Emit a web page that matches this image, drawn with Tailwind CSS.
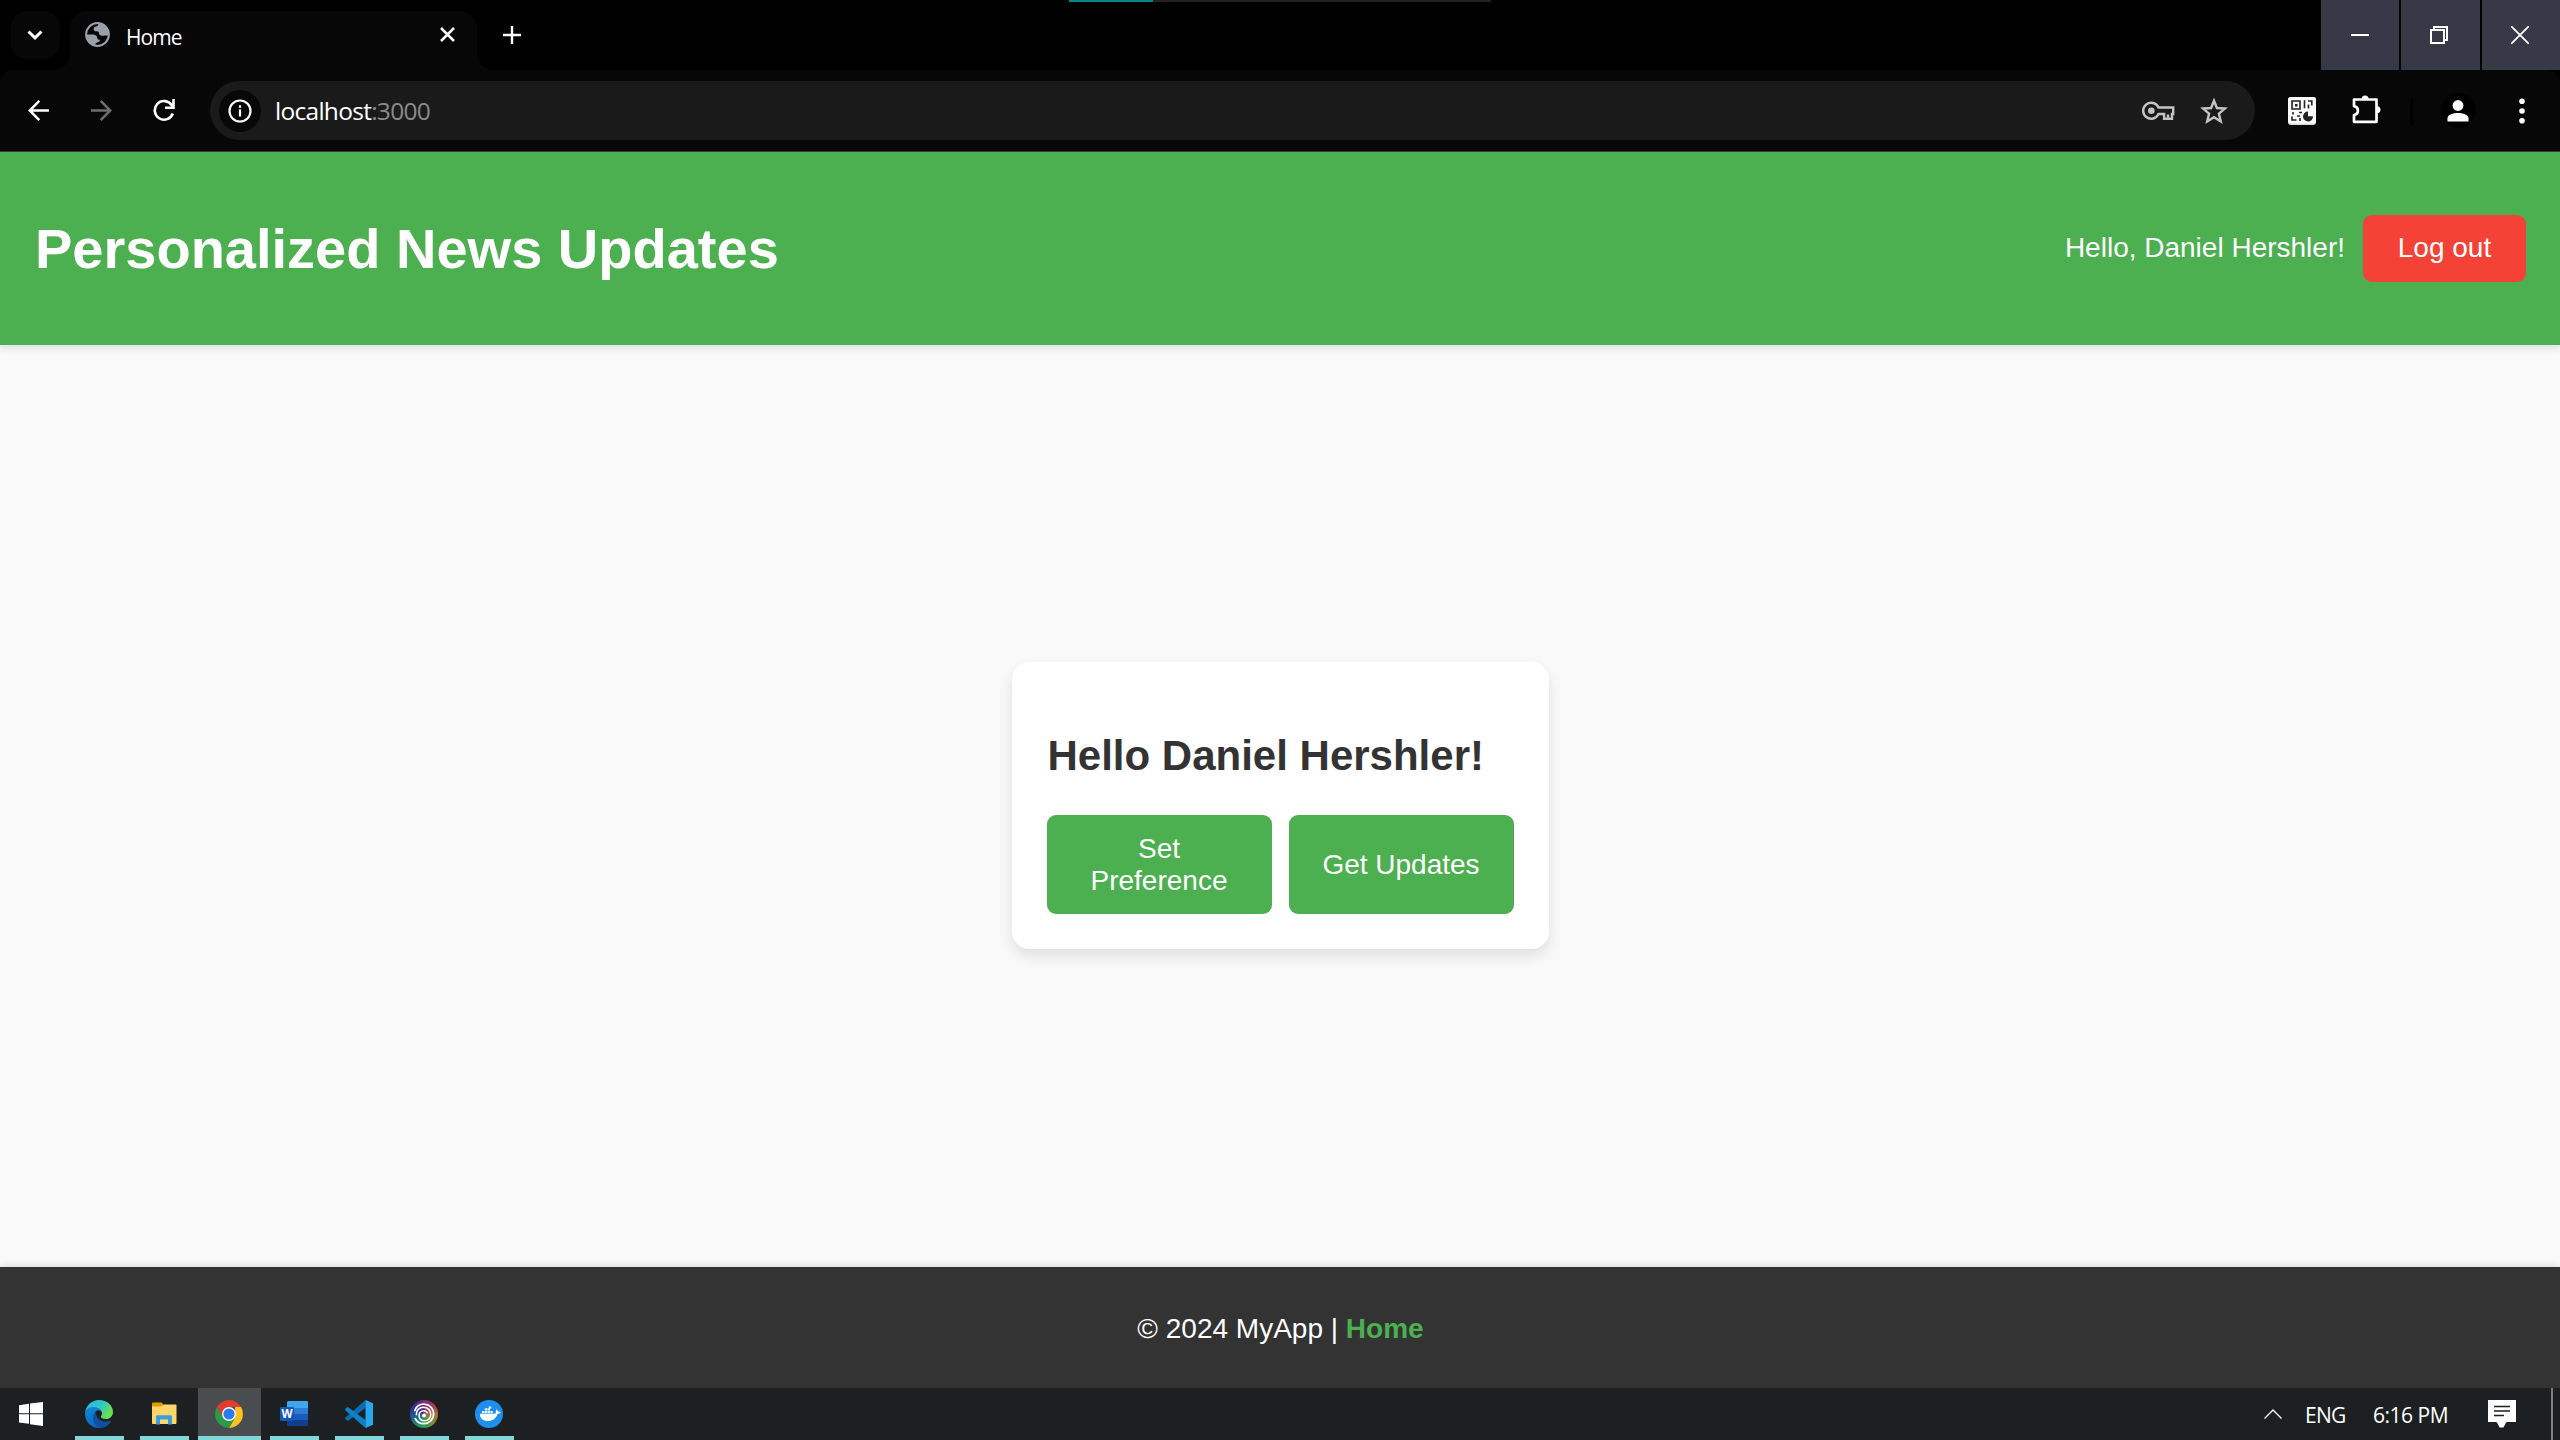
<!DOCTYPE html>
<html lang="en">
<head>
<meta charset="utf-8">
<title>Home</title>
<script src="https://cdn.jsdelivr.net/npm/@tailwindcss/browser@4"></script>
</head>
<body class="flex h-[1440px] w-[2560px] flex-col overflow-hidden bg-black font-['Liberation_Sans',Arial,sans-serif]">

<!-- Tab strip -->
<div class="relative flex h-[70px] shrink-0 bg-black">
  <div class="ml-[11px] mt-[11px] flex h-12 w-[49px] items-center justify-center rounded-[16px] bg-[#070707] pr-px">
    <svg width="16" height="10" viewBox="0 0 16 10" fill="none" stroke="#fff" stroke-width="3"><path d="M1.500 1.500 8 7.800l6.500-6.300"/></svg>
  </div>
  <div class="relative ml-[10px] mt-[11px] flex h-[59px] w-[407px] items-center rounded-t-[17px] bg-[#070707] pl-[15px] pr-[22px]">
    <svg class="absolute bottom-0 -left-[17px]" width="17" height="17"><path d="M17 0v17H0A17 17 0 0 0 17 0" fill="#070707"/></svg>
    <svg class="absolute bottom-0 -right-[17px]" width="17" height="17"><path d="M0 0v17h17A17 17 0 0 1 0 0" fill="#070707"/></svg>
    <svg class="-mt-[12px]" width="25" height="25" viewBox="0 0 25 25"><circle cx="12.500" cy="12.500" r="11.400" fill="#070707" stroke="#9aa0a9" stroke-width="2"/><path fill="#9aa0a9" d="M14 1c-1 2-1 3-3 3.500-2 .3-2.500 1.200-2.300 3 .2 1.500 1.500 1.800 3 1.800 2 0 2.300.7 2.300 2 .2 1.700 1.200 2.400 3 2.400 1.600 0 2.600-.4 3.600-.2 1.300.2 2 .1 3.400-.5C24 6.500 19 1 14 1zM1 12.500h6.500c3 0 4.800 1.200 4.800 3.800 0 1 .7 1.200 1.700 1.300 1.200.2 1 1.400.2 2-1.200 1-3.200.7-3.900 2.400-.2.700-.2 1.200-.2 2C4.500 23.300 1 18.500 1 12.500z"/></svg>
    <span class="-mt-[8px] ml-[16px] font-['Open_Sans'] text-[21px] leading-7 tracking-[-0.9px] text-white">Home</span>
    <svg class="-mt-[12px] ml-auto" width="15" height="15" viewBox="0 0 15 15" stroke="#fff" stroke-width="2.500"><path d="m1 1 13 13M14 1 1 14"/></svg>
  </div>
  <svg class="ml-[26px] mt-[26px]" width="18" height="18" viewBox="0 0 18 18" stroke="#fff" stroke-width="2.400"><path d="M9 0v18M0 9h18"/></svg>
  <div class="absolute left-[1069px] top-0 flex h-[2px] w-[422px] bg-[#222]"><div class="w-[84px] bg-[#078488]"></div></div>
  <div class="ml-auto flex gap-[2px]">
    <div class="flex w-[78px] items-center justify-center bg-[#373946]"><div class="h-[2px] w-[18px] bg-white"></div></div>
    <div class="flex w-[79px] items-center justify-center bg-[#373946] pr-[3px]"><svg width="18" height="18" viewBox="0 0 18 18" fill="none" stroke="#fff" stroke-width="2" shape-rendering="crispEdges"><path d="M1 4h13v13H1zM4 4V1h13v13h-3"/></svg></div>
    <div class="flex w-[78px] items-center justify-center bg-[#373946] pr-[3px]"><svg width="18" height="18" viewBox="0 0 18 18" stroke="#fff" stroke-width="1.800"><path d="m0 0 18 18M18 0 0 18"/></svg></div>
  </div>
</div>

<!-- Toolbar -->
<div class="flex h-[82px] shrink-0 items-center rounded-t-[14px] border-b border-[#3b3b3b] bg-[#070707] pl-[7px]">
  <div class="flex w-[63px] justify-center"><svg width="21" height="21" viewBox="0 0 21 21" fill="none" stroke="#fff" stroke-width="2.500"><path d="M21 10.500H2M11.300.9l-9.600 9.600 9.600 9.600"/></svg></div>
  <div class="flex w-[63px] justify-center"><svg width="21" height="21" viewBox="0 0 21 21" fill="none" stroke="#6e6e6e" stroke-width="2.500"><path d="M0 10.500h19M9.700.9l9.600 9.600-9.600 9.600"/></svg></div>
  <div class="flex w-[63px] justify-center pr-px"><svg width="22" height="23" viewBox="0 0 22 23" fill="none" stroke="#fff" stroke-width="2.600"><path d="M19.800 14.500A9.300 9.300 0 1 1 18.800 6.200L21 8.500M20.500 0v8.700h-8.500"/></svg></div>
  <div class="ml-[14px] flex h-[59px] w-[2045px] items-center rounded-full bg-[#1a1a1a] pl-[9px]">
    <div class="flex size-[42px] items-center justify-center rounded-full bg-[#070707]">
      <svg width="24" height="24" viewBox="0 0 24 24" fill="none" stroke="#fff" stroke-width="2.200"><circle cx="12" cy="12" r="10.500"/><path d="M12 10.500v7M12 6.200v2.500"/></svg>
    </div>
    <span class="ml-[14px] font-['Open_Sans'] text-[24.500px] leading-8 tracking-[-0.72px] text-white">localhost<span class="text-[#8a8a8a]">:3000</span></span>
    <svg class="ml-auto" width="33" height="20" viewBox="0 0 33 20" fill="none" stroke="#c4c4c4" stroke-width="2.400"><path d="M16.500 6.500A8 8 0 1 0 16.500 13h5.600v4.800H30V13h1.200V6.500z"/><path d="M26 18v-4.500"/><circle cx="9.300" cy="9.800" r="3.300" fill="#c4c4c4" stroke="none"/></svg>
    <svg class="ml-[25px] mr-[27px]" width="28" height="28" viewBox="0 0 28 28" fill="none" stroke="#c4c4c4" stroke-width="2.400"><path d="m14 3.800 2.900 7.200 8 .6-6 5 1.900 7.900-6.800-4.300-6.800 4.300 1.900-7.900-6-5 8-.6z"/></svg>
  </div>
  <svg class="ml-[33px]" width="28" height="28" viewBox="0 0 28 28"><rect width="28" height="28" rx="3" fill="#d9d9d9"/><rect width="28" height="26.500" rx="3" fill="#fafafa"/><g fill="none" stroke="#222" stroke-width="1.600"><path d="M4 4h8v8H4zM16.500 3.200v8M20 4h3.800v4.500M20.500 7.500v4M5 15v2.500M9 19h3M11 15.500h3M4 19.500V23h4.500M12 21v3"/></g><path fill="#222" d="M7 7h2.500v2.500H7zM20 14.500v4.800h5a5 5 0 1 1-5-4.800z"/></svg>
  <svg class="-mt-[3px] ml-[36px]" width="30" height="30" viewBox="0 0 30 30" fill="none" stroke="#fff" stroke-width="2.700" stroke-linejoin="round"><path d="M2 5.500h22.500v22.300H2v-6.700c5.200-1 5.200-8 0-9z"/><path fill="#fff" stroke="none" d="M9.600 5a3.500 3.500 0 0 1 7 0zM25 12.200a3.500 3.500 0 0 1 0 7z"/></svg>
  <div class="ml-[28px] h-7 w-[3px] rounded bg-black"></div>
  <div class="ml-[28px] flex size-[35px] items-center justify-center rounded-full bg-black pr-px"><svg width="22" height="22" viewBox="0 0 22 22" fill="#fff"><circle cx="11" cy="5.500" r="5.400"/><path d="M.5 21.500v-3.300c0-3.600 6-5.200 10.500-5.200s10.500 1.600 10.500 5.200v3.300z"/></svg></div>
  <svg class="ml-[43px]" width="6" height="26" viewBox="0 0 6 26" fill="#fff"><circle cx="3" cy="3.200" r="2.800"/><circle cx="3" cy="13" r="2.800"/><circle cx="3" cy="22.700" r="2.800"/></svg>
</div>

<!-- Page -->
<header class="relative flex h-[193px] shrink-0 items-center justify-between bg-[#4caf50] pl-[35px] pr-[34px] text-white shadow-[0_3.500px_7px_rgba(0,0,0,0.1)]">
  <h1 class="text-[56px] font-bold leading-[64px]">Personalized News Updates</h1>
  <div class="flex items-center text-[28px] leading-8">
    <span class="pb-[2px]">Hello, Daniel Hershler!</span>
    <button class="ml-[18px] h-[67px] w-[163px] rounded-[9px] bg-[#f44336] pb-[2px]">Log out</button>
  </div>
</header>
<main class="flex h-[922px] shrink-0 items-center justify-center bg-[#f9f9f9] pb-[2px]">
  <section class="h-[287px] w-[537px] rounded-[17.500px] bg-white px-[35px] pt-[70px] shadow-[0_7px_14px_rgba(0,0,0,0.1)]">
    <h2 class="whitespace-nowrap pl-px text-[42px] font-bold leading-[48px] text-[#333]">Hello Daniel Hershler!</h2>
    <div class="mt-[35px] flex gap-[17px] text-[28px] leading-8 text-white">
      <button class="h-[99px] w-[225px] rounded-[9px] bg-[#4caf50] px-[35px] pt-px">Set Preference</button>
      <button class="h-[99px] w-[225px] whitespace-nowrap rounded-[9px] bg-[#4caf50] pt-px">Get Updates</button>
    </div>
  </section>
</main>
<footer class="relative flex h-[121px] shrink-0 items-center justify-center bg-[#333] text-[28px] leading-8 text-white shadow-[0_-3.500px_7px_rgba(0,0,0,0.1)]">
  <p class="pl-px pt-[2px]">© 2024 MyApp | <a class="font-bold text-[#4caf50]">Home</a></p>
</footer>

<!-- Taskbar -->
<div class="relative flex h-[52px] shrink-0 gap-[2px] bg-[#1c2022]">
  <div class="mr-1 flex w-[62px] items-center justify-center"><svg width="24" height="24" viewBox="0 0 24 24" fill="#fff"><path d="M0 3.200 10 1.800v9.400H0zM11 1.600 24 0v11.200H11zM0 12.300h10v9.500L0 20.500zM11 12.300h13V24l-13-1.700z"/></svg></div>

  <div class="flex w-[63px] flex-col items-center justify-between pt-3">
    <svg class="mr-px" width="28" height="28" viewBox="0 0 28 28"><defs><linearGradient id="eg" x1="0" y1="0" x2="1" y2=".5"><stop offset="0" stop-color="#2ab4f0"/><stop offset=".55" stop-color="#2fc6c8"/><stop offset="1" stop-color="#6be14c"/></linearGradient><linearGradient id="eb" x1="0" y1="0" x2=".5" y2="1"><stop offset="0" stop-color="#1489d4"/><stop offset="1" stop-color="#0a63c4"/></linearGradient></defs>
      <path fill="url(#eg)" d="M.3 11.500C1.500 5 7 0 14 0c8 0 14 5.500 14 12 0 4.300-3.200 7-7 7-3.500 0-5.200-1.200-5.200-2.200 0-.8 1.200-1.300 1.200-3.500 0-2.800-2.800-4.300-5.500-4.300z"/>
      <path fill="url(#eb)" d="M0 14C0 9.500 4 7 8.500 7c4.800 0 8.500 3 8.500 6.300 0-1.800-1.500-3-3.300-3-2.700 0-4.200 2.300-4.200 5.200 0 5.500 4.500 9.500 10 9.500 1.500 0 3-.4 4-.8C21 26.800 17.500 28 14 28 6 28 0 21.700 0 14z"/>
      <path fill="#114f9e" d="M11 12.200c-2 1.500-3 3.300-3 5.800 0 5 3.500 9.200 7.500 9.900 4.500-.2 8.500-3 10.500-6.700.3-.7-.3-.9-.8-.6-5.700 2.600-14.200.2-14.200-8.400z"/></svg>
    <div class="h-1 w-[49px] bg-[#83d6d8]"></div>
  </div>

  <div class="flex w-[63px] flex-col items-center justify-between pt-[14px]">
    <svg class="mr-px" width="26" height="24" viewBox="0 0 26 24"><path fill="#e39c04" d="M1 1.500C1 .7 1.500.5 2 .5h8.500L13 3v6H1z"/><path fill="#ffd769" d="M1 4.500h9.500L13 2.500h11.500c.7 0 1 .4 1 1V21c0 .6-.4 1-1 1H2c-.6 0-1-.4-1-1z"/><path fill="#3d9be4" d="M5 14.500c0-.8.600-1.300 1.300-1.300h13.400c.8 0 1.300.5 1.300 1.300V22.500h-4v-5H9v5H5z"/></svg>
    <div class="h-1 w-[49px] bg-[#83d6d8]"></div>
  </div>

  <div class="flex w-[63px] flex-col items-center justify-between bg-[#4a4d4f] pt-3">
    <svg class="mr-px" width="28" height="28" viewBox="0 0 28 28"><path fill="#e33b2e" d="M1.900 7A14 14 0 0 1 26.100 7H14L8 17.500z"/><path fill="#fcc31e" d="M26.100 7A14 14 0 0 1 14 28l6.100-10.500L20.100 7z"/><path fill="#2b9b48" d="M1.900 7A14 14 0 0 0 14 28l6-10.500H8z"/><circle cx="14" cy="14" r="7" fill="#fff"/><circle cx="14" cy="14" r="5.600" fill="#2b7af0"/></svg>
    <div class="h-1 w-full bg-[#83d6d8]"></div>
  </div>

  <div class="flex w-[63px] flex-col items-center justify-between pt-3">
    <svg class="mr-px" width="28" height="28" viewBox="0 0 28 28"><path fill="#41a5ee" d="M8 1h19a1 1 0 0 1 1 1v6H7V2z"/><path fill="#2b7cd3" d="M7 8h21v6H7z"/><path fill="#185abd" d="M7 14h21v6H7z"/><path fill="#103f91" d="M7 20h21v5a1 1 0 0 1-1 1H8a1 1 0 0 1-1-1z"/><rect y="7" width="14" height="14" rx="1.200" fill="#1756b8"/><text x="7" y="18.200" text-anchor="middle" font-family="Open Sans" font-weight="700" font-size="11.500" fill="#fff">W</text></svg>
    <div class="h-1 w-[49px] bg-[#83d6d8]"></div>
  </div>

  <div class="flex w-[63px] flex-col items-center justify-between pt-3">
    <svg class="mr-px" width="28" height="28" viewBox="0 0 28 28"><path fill="#0b6cb0" d="M.5 17.500 20.500 0v8L3.500 20.600c-.6.400-1.100.3-1.600-.1L.4 19.100c-.5-.4-.5-1.100.1-1.600z"/><path fill="#1181c6" d="M.5 10.500 20.500 28v-8L3.500 7.400c-.6-.4-1.100-.3-1.600.1L.4 8.900c-.5.400-.5 1.100.1 1.600z"/><path fill="#27a7ee" d="M20.500 0 28 3.200v21.600L20.500 28z"/></svg>
    <div class="h-1 w-[49px] bg-[#83d6d8]"></div>
  </div>

  <div class="flex w-[63px] flex-col items-center justify-between pt-3">
    <div class="mr-px flex size-7 items-center justify-center rounded-full bg-[conic-gradient(from_0deg,#7a2a78,#a83a50,#a87038,#7a8a38,#2f9a50,#22807a,#224c98,#3a2890,#7a2a78)]"><svg width="28" height="28" viewBox="0 0 28 28" fill="none" stroke="#fff" stroke-linecap="round"><path stroke-width="1.800" d="M4.800 10.500C6.200 6.300 10 4 14.200 4.100c5.400.2 9.400 4.500 9.400 9.900 0 5.400-4.400 9.600-9.800 9.600-3.800 0-7-2-8.500-5"/><path stroke-width="1.600" d="M6.300 14.800c-.3-4.200 3-7.600 7.200-7.600 4.300 0 7.300 3.300 7.300 7.300 0 3.600-2.700 6.300-6.200 6.300-3.200 0-5.600-2.200-5.600-5.200 0-2.800 2-4.900 4.700-4.900 1.600 0 2.900.8 3.500 2"/><circle cx="14" cy="15.600" r="2" fill="#fff" stroke="none"/></svg></div>
    <div class="h-1 w-[49px] bg-[#83d6d8]"></div>
  </div>

  <div class="flex w-[63px] flex-col items-center justify-between pt-3">
    <svg class="mr-px" width="28" height="28" viewBox="0 0 28 28"><circle cx="14" cy="14" r="14" fill="#1d8fee"/><g fill="#fff"><path d="M5 13.700h14.500c1 0 1.500-.4 1.300-1.600-.1-1 .2-2 .9-2.800.9.700 1.400 1.500 1.400 2.400.9-.2 1.900 0 2.700.5-.6 1.200-1.700 1.700-3.200 1.700-1.700 4.800-5 7-9.800 7-5 0-8-2.500-7.800-7.200z"/><path d="M7 10.900h2.400v2.300H7zM9.800 10.900h2.400v2.300H9.800zM12.600 10.900H15v2.300h-2.400zM15.400 10.900h2.400v2.300h-2.400zM9.800 8.200h2.400v2.300H9.800zM12.600 8.200H15v2.300h-2.400zM13.800 6.500h2.400v2h-2.400z" opacity=".9"/></g></svg>
    <div class="h-1 w-[49px] bg-[#83d6d8]"></div>
  </div>

  <div class="ml-auto flex items-center font-['Open_Sans'] text-[21px] leading-7 text-white">
    <svg width="18" height="10" viewBox="0 0 18 10" fill="none" stroke="#fff" stroke-width="1.400"><path d="M.5 9.500 9 1l8.500 8.500"/></svg>
    <span class="ml-[23px] mt-[2px] w-[68px] tracking-[-0.7px]">ENG</span>
    <span class="mt-[2px] w-[115px] tracking-[-0.5px]">6:16 PM</span>
    <svg width="28" height="28" viewBox="0 0 28 28"><path fill="#fff" d="M0 0h28v22h-9c-1 0-2 3-3.500 5.500h-4C10.500 25 9 22 8 22H0z"/><path stroke="#1c2022" stroke-width="1.600" d="M6 6.500h16M6 11h16M6 15.500h10"/></svg>
    <div class="ml-[35px] h-full w-[2px] bg-[#7c7f80]"></div>
    <div class="w-[7px]"></div>
  </div>
</div>
</body>
</html>
